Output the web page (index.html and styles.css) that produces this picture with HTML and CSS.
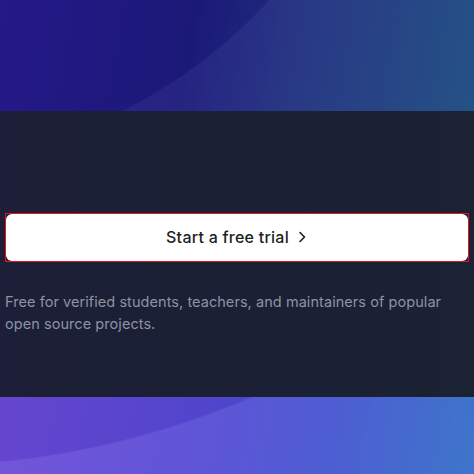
FILE: index.html
```html
<!DOCTYPE html>
<html lang="en">
<head>
<meta charset="utf-8">
<link rel="stylesheet" href="styles.css">
<title>Start a free trial</title>
</head>
<body>
  <div class="hero-top"></div>
  <section class="panel">
    <div class="cta-frame">
      <a class="cta" href="#">
        <span>Start a free trial</span>
        <svg class="chev" width="16" height="16" viewBox="0 0 16 16" aria-hidden="true">
          <path d="M6 3.5 10.5 8 6 12.5" fill="none" stroke="currentColor" stroke-width="1.6" stroke-linecap="round" stroke-linejoin="round"/>
        </svg>
      </a>
    </div>
    <p class="note">Free for verified students, teachers, and maintainers of popular open source projects.</p>
  </section>
  <div class="hero-bottom"></div>
</body>
</html>
```

FILE: styles.css
```css
html, body {
  margin: 0;
  padding: 0;
}
body {
  width: 474px;
  height: 474px;
  overflow: hidden;
  background: #1b2034;
  font-family: Inter, "Noto Sans", sans-serif;
}
.hero-top {
  height: 111px;
  background:
    radial-gradient(circle 517px at -110px -350px, rgba(0,0,0,0.03) 99.7%, rgba(255,255,255,0.045) 100%),
    linear-gradient(100deg, #26198c 0%, #1c1a7c 40%, #1f2f80 62%, #1b4a80 100%);
}
.panel {
  height: 286px;
  box-sizing: border-box;
  padding: 102px 5px 0 5px;
  background: linear-gradient(90deg, #1c1f37 0%, #1b2034 50%, #1a2233 100%);
}
.cta-frame {
  border: 1px solid #e8121b;
  height: 47px;
}
.cta {
  display: flex;
  align-items: center;
  justify-content: center;
  gap: 5px;
  height: 100%;
  box-sizing: border-box;
  padding: 0 0 2px 2px;
  background: #fff;
  border-radius: 6px;
  color: #1b1f24;
  text-decoration: none;
  font-size: 16px;
  font-weight: 500;
  letter-spacing: 0.25px;
}
.note {
  margin: 29px 0 0 0;
  color: #8d93a4;
  font-size: 14.5px;
  line-height: 22px;
  letter-spacing: 0.06px;
}
.hero-bottom {
  height: 77px;
  background:
    radial-gradient(circle 862px at -86px -792px, rgba(0,0,0,0.04) 99.8%, rgba(255,255,255,0.07) 100%),
    linear-gradient(100deg, #6a48d6 0%, #5248d4 45%, #4052cf 70%, #2f6bc6 100%);
}
```
